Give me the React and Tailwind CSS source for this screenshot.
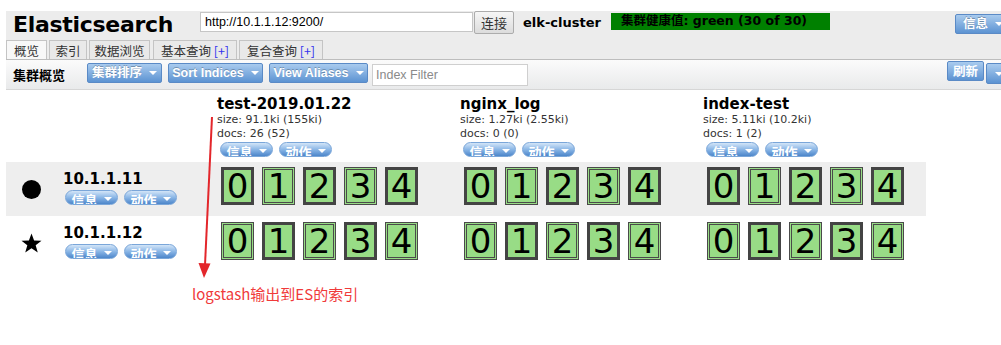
import React from "react";

const CJK = "font-['Noto_Sans_CJK_SC',sans-serif]";
const VERD = "font-['DejaVu_Sans','Noto_Sans_CJK_SC',sans-serif]";
const ARIAL = "font-['Liberation_Sans','Noto_Sans_CJK_SC',sans-serif]";

function Caret() {
  return (
    <span className="block w-0 h-0 border-l-[4px] border-r-[4px] border-t-[4px] border-l-transparent border-r-transparent border-t-white" />
  );
}

function ToolBtn({ label, w }) {
  return (
    <div
      className={`${w} h-[20px] shrink-0 flex items-center justify-center gap-[7px] rounded-[2px] border border-[#5a8ac6] bg-gradient-to-b from-[#a9cbee] to-[#5c93d2] text-white font-bold text-[12.5px] ${ARIAL} [text-shadow:0_-1px_0_rgba(0,0,0,0.25)]`}
    >
      <span>{label}</span>
      <Caret />
    </div>
  );
}

function Pill({ label }) {
  return (
    <div className="h-[15px] w-[53px] shrink-0 rounded-full overflow-hidden border border-[#7aa6d9] bg-gradient-to-b from-[#d3e5f7] via-[#8ab6e6] to-[#4c86ca] flex justify-center items-start gap-[6px]">
      <span className={`mt-[2px] text-[13px] leading-[14px] font-bold text-white whitespace-nowrap ${CJK}`}>{label}</span>
      <div className="mt-[6px]">
        <Caret />
      </div>
    </div>
  );
}

function Shard({ n, primary }) {
  return (
    <div
      className={`w-[33px] h-[38px] shrink-0 bg-[#98dc86] border-[3px] ${primary ? "border-solid border-[#444]" : "border-double border-[#4a4a4a]"} flex items-center justify-center overflow-hidden`}
    >
      <span className={`text-[34px] leading-none text-black ${VERD} font-normal`}>{n}</span>
    </div>
  );
}

function ShardRow({ primaries }) {
  return (
    <div className="flex gap-[8px] pl-[4px]">
      {[0, 1, 2, 3, 4].map((i) => (
        <Shard key={i} n={i} primary={primaries.includes(i)} />
      ))}
    </div>
  );
}

function IndexHead({ name, size, docs }) {
  return (
    <div className="pt-[5px]">
      <div className={`text-[15px] leading-[18px] font-bold text-black ${VERD}`}>{name}</div>
      <div className={`text-[11px] leading-[14px] text-[#333] ${VERD}`}>{size}</div>
      <div className={`text-[11px] leading-[14px] text-[#333] ${VERD}`}>{docs}</div>
      <div className="flex gap-[6px] pl-[3px] mt-[1px]">
        <Pill label="信息" />
        <Pill label="动作" />
      </div>
    </div>
  );
}

function NodeCell({ icon, name }) {
  return (
    <div className="flex items-center">
      <div className="w-[51px] shrink-0 flex justify-center">{icon}</div>
      <div className="ml-[6px] pt-[8px] self-start">
        <div className={`text-[15px] leading-[18px] font-bold text-black ${VERD}`}>{name}</div>
        <div className="flex gap-[6px] pl-[2px] mt-[2px]">
          <Pill label="信息" />
          <Pill label="动作" />
        </div>
      </div>
    </div>
  );
}

export default function App() {
  const cols = "w-[920px] grid grid-cols-[211px_243px_243px_223px]";
  return (
    <div className="w-[1001px] h-[345px] bg-white relative overflow-hidden">
      <div className="pt-[11px] pl-[6px]">
        {/* header */}
        <div className="bg-[#ececec]">
          <div className="h-[28px] flex items-start">
            <div className={`w-[194px] shrink-0 pl-[7px] text-[22px] leading-[28px] font-bold text-black ${VERD} tracking-[-0.3px]`}>
              Elasticsearch
            </div>
            <div className={`mt-[1px] w-[273px] h-[20px] shrink-0 bg-white border border-[#c6c6c6] flex items-center pl-[4px] text-[12.5px] text-black ${ARIAL}`}>
              http://10.1.1.12:9200/
            </div>
            <div className={`ml-[1px] w-[40px] h-[23px] shrink-0 border border-[#acacac] rounded-[2px] bg-gradient-to-b from-[#f6f6f6] to-[#dcdcdc] flex items-center justify-center text-[13px] text-[#333] ${CJK}`}>
              连接
            </div>
            <div className={`ml-[9px] mt-[3px] text-[13px] leading-[18px] font-bold text-black ${VERD}`}>elk-cluster</div>
            <div className={`ml-[10px] mt-[2px] h-[17px] w-[219px] shrink-0 bg-[#008000] flex items-center pl-[10px] text-[12.5px] font-bold text-black whitespace-nowrap ${VERD}`}>
              集群健康值: green (30 of 30)
            </div>
            <div className="ml-auto mt-[3px] -mr-[10px]">
              <ToolBtn label="信息" w="w-[56px]" />
            </div>
          </div>
          {/* tabs */}
          <div className={`h-[20px] flex items-end gap-[2px] text-[12.5px] text-[#333] ${CJK}`}>
            <div className="w-[41px] h-[19px] border border-b-0 border-[#c4c4c4] bg-[#f8f8f8] flex items-end justify-center leading-[17px]">概览</div>
            <div className="w-[38px] h-[19px] border border-b-0 border-[#c4c4c4] bg-[#e9e9e9] flex items-end justify-center leading-[17px]">索引</div>
            <div className="w-[61px] h-[19px] border border-b-0 border-[#c4c4c4] bg-[#e9e9e9] flex items-end justify-center leading-[17px]">数据浏览</div>
            <div className="ml-[1px] w-[84px] h-[19px] border border-b-0 border-[#c4c4c4] bg-[#e9e9e9] flex items-end justify-center leading-[17px] whitespace-nowrap">
              基本查询&nbsp;<span className="text-[#3333ee]">[+]</span>
            </div>
            <div className="w-[84px] h-[19px] border border-b-0 border-[#c4c4c4] bg-[#e9e9e9] flex items-end justify-center leading-[17px] whitespace-nowrap">
              复合查询&nbsp;<span className="text-[#3333ee]">[+]</span>
            </div>
          </div>
        </div>
        {/* toolbar */}
        <div className="h-[31px] border-t border-b border-t-[#bdbdbd] border-b-[#d6d6d6] bg-gradient-to-b from-[#fbfbfb] to-[#e9eaeb] flex items-center">
          <div className={`w-[81px] shrink-0 pl-[7px] text-[13px] font-bold text-black ${CJK}`}>集群概览</div>
          <div className="flex items-center gap-[6px] -mt-[3px]">
            <ToolBtn label="集群排序" w="w-[75px]" />
            <ToolBtn label="Sort Indices" w="w-[95px]" />
            <ToolBtn label="View Aliases" w="w-[99px]" />
          </div>
          <div className={`ml-[4px] mt-[1px] w-[156px] h-[22px] shrink-0 bg-white border border-[#cfcfcf] flex items-center pl-[3px] text-[12.5px] text-[#8a8a8a] ${ARIAL}`}>
            Index Filter
          </div>
          <div className="ml-auto flex items-start -mr-[10px]">
            <div className={`w-[37px] h-[20px] -mt-[4px] border border-[#5a8ac6] rounded-[2px] bg-gradient-to-b from-[#a9cbee] to-[#5c93d2] flex items-center justify-center text-white font-bold text-[12.5px] ${CJK}`}>
              刷新
            </div>
            <div className="ml-[2px] w-[25px] h-[21px] -mt-[2px] border border-[#5a8ac6] rounded-[2px] bg-gradient-to-b from-[#a9cbee] to-[#5c93d2] flex items-center justify-center">
              <Caret />
            </div>
          </div>
        </div>
        {/* content */}
        <div className={`${cols} h-[72px]`}>
          <div />
          <IndexHead name="test-2019.01.22" size="size: 91.1ki (155ki)" docs="docs: 26 (52)" />
          <IndexHead name="nginx_log" size="size: 1.27ki (2.55ki)" docs="docs: 0 (0)" />
          <IndexHead name="index-test" size="size: 5.11ki (10.2ki)" docs="docs: 1 (2)" />
        </div>
        <div className={`${cols} h-[54px] bg-[#eeeeee]`}>
          <NodeCell icon={<div className="w-[19px] h-[19px] rounded-full bg-black" />} name="10.1.1.11" />
          <div className="pt-[5px]"><ShardRow primaries={[0, 2, 4]} /></div>
          <div className="pt-[5px]"><ShardRow primaries={[0, 2, 4]} /></div>
          <div className="pt-[5px]"><ShardRow primaries={[0, 2, 4]} /></div>
        </div>
        <div className={`${cols} h-[54px]`}>
          <NodeCell
            icon={
              <svg width="21" height="20" viewBox="0 0 24 23">
                <polygon points="12,0.5 15,8.5 23.5,8.8 16.8,14 19.2,22.3 12,17.5 4.8,22.3 7.2,14 0.5,8.8 9,8.5" fill="#000" />
              </svg>
            }
            name="10.1.1.12"
          />
          <div className="pt-[6px]"><ShardRow primaries={[1, 3]} /></div>
          <div className="pt-[6px]"><ShardRow primaries={[1, 3]} /></div>
          <div className="pt-[6px]"><ShardRow primaries={[1, 3]} /></div>
        </div>
      </div>
      {/* annotation */}
      <svg className="absolute left-0 top-0 pointer-events-none" width="1001" height="345">
        <line x1="212" y1="117" x2="205" y2="265" stroke="#e3262b" strokeWidth="2" />
        <polygon points="198.5,263 210.5,263.5 204,278" fill="#e3262b" />
      </svg>
      <div className={`absolute left-[192px] top-[284px] text-[15px] leading-[20px] text-[#f03a3a] whitespace-nowrap ${CJK}`}>
        logstash输出到ES的索引
      </div>
    </div>
  );
}
